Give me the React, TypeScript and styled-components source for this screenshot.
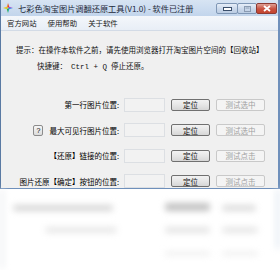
import React from 'react';
import styled, { createGlobalStyle } from 'styled-components';

const GlobalStyle = createGlobalStyle`
  html, body {
    margin: 0;
    padding: 0;
    background: #ffffff;
  }
  body {
    width: 280px;
    height: 270px;
    overflow: hidden;
    font-family: "Noto Sans CJK SC", "DejaVu Sans", sans-serif;
  }
`;

const Page = styled.div`
  width: 280px;
  height: 270px;
  display: flex;
  flex-direction: column;
  background: #ffffff;
`;

const Window = styled.div`
  width: 280px;
  height: 189px;
  box-sizing: border-box;
  display: flex;
  flex-direction: column;
  background: #c9daee;
  border-left: 1px solid #5a7aa3;
  border-right: 2px solid #6f90bb;
  border-bottom: 1px solid #6f90bb;
`;

const TitleBar = styled.div`
  height: 17px;
  display: flex;
  align-items: center;
  padding-left: 2px;
  background: linear-gradient(#d7e4f3, #c2d5ec);
`;

const TitleText = styled.span`
  font-size: 8.2px;
  color: #1e2a3a;
  margin-left: 5px;
  white-space: nowrap;
  flex: 1;
`;

const Controls = styled.div`
  display: flex;
  align-self: flex-start;
  margin-top: 3px;
  margin-right: 1px;
`;

const CtrlButton = styled.div<{ $close?: boolean; $w: number }>`
  width: ${({ $w }) => $w}px;
  height: 11px;
  box-sizing: border-box;
  border: 1px solid ${({ $close }) => ($close ? '#8d3a33' : '#7f97b5')};
  border-radius: 2px;
  margin-left: -1px;
  display: flex;
  align-items: center;
  justify-content: center;
  background: ${({ $close }) =>
    $close ? 'linear-gradient(#e0a195, #c8503f 55%, #c4452f)' : 'linear-gradient(#e6eef8, #c9d7ea 55%, #bccde3)'};
`;

const MenuBar = styled.div`
  height: 14px;
  display: flex;
  align-items: center;
  gap: 11px;
  padding-left: 6px;
  background: linear-gradient(#f4f7fb, #e8eef6);
  border-bottom: 1px solid #d3dbe6;
`;

const MenuItem = styled.span`
  font-size: 7.4px;
  color: #1a1a1a;
`;

const Client = styled.div`
  flex: 1;
  background: #f0f0f0;
  display: flex;
  flex-direction: column;
  padding: 11px 0 0 15px;
`;

const HintLine = styled.div<{ $indent?: number }>`
  font-size: 7.5px;
  line-height: 16px;
  height: 16px;
  color: #111;
  white-space: nowrap;
  padding-left: ${({ $indent }) => $indent ?? 0}px;
`;

const Mono = styled.span`
  font-family: "Liberation Mono", monospace;
  font-size: 7.5px;
  margin: 0 4px;
`;

const Form = styled.div`
  margin-top: 24px;
  display: grid;
  grid-template-columns: 103px 40px 39px 49px;
  column-gap: 6px;
  row-gap: 11.5px;
  align-items: center;
`;

const LabelCell = styled.div`
  display: flex;
  justify-content: flex-end;
  align-items: center;
  gap: 6px;
  font-size: 7.5px;
  color: #000;
  white-space: nowrap;
  height: 14px;
`;

const HelpButton = styled.div`
  width: 10px;
  height: 11px;
  box-sizing: border-box;
  border: 1px solid #8c8c8c;
  border-radius: 2px;
  background: linear-gradient(#f6f6f6, #dcdcdc);
  font-size: 7px;
  display: flex;
  align-items: center;
  justify-content: center;
  font-family: "Liberation Sans", sans-serif;
`;

const Field = styled.div`
  height: 14px;
  box-sizing: border-box;
  border: 1px solid #dcdfe3;
  background: #f2f2f2;
  margin-left: -1px;
`;

const Button = styled.div<{ $disabled?: boolean }>`
  height: 12px;
  box-sizing: border-box;
  border: 1px solid ${({ $disabled }) => ($disabled ? '#c9c9c9' : '#707070')};
  border-radius: 2px;
  background: ${({ $disabled }) => ($disabled ? '#f4f4f4' : 'linear-gradient(#f2f2f2, #e6e6e6 50%, #d6d6d6)')};
  color: ${({ $disabled }) => ($disabled ? '#a0a0a0' : '#111')};
  font-size: 7.5px;
  display: flex;
  align-items: center;
  justify-content: center;
  white-space: nowrap;
`;

const Backdrop = styled.div`
  flex: 1;
  position: relative;
  overflow: hidden;
  filter: blur(3px);
`;

const Smudge = styled.div<{ $x: number; $y: number; $w: number; $h: number; $c: string }>`
  position: absolute;
  left: ${({ $x }) => $x}px;
  top: ${({ $y }) => $y}px;
  width: ${({ $w }) => $w}px;
  height: ${({ $h }) => $h}px;
  background: ${({ $c }) => $c};
  border-radius: 3px;
`;

const AppIcon = () => (
  <svg width="10" height="10" viewBox="0 0 10 10">
    <path d="M5 0 L6.2 3.8 L5 5 Z" fill="#e53b2f" />
    <path d="M10 5 L6.2 6.2 L5 5 Z" fill="#3a8ee6" />
    <path d="M5 10 L3.8 6.2 L5 5 Z" fill="#2fb24a" />
    <path d="M0 5 L3.8 3.8 L5 5 Z" fill="#f2c01e" />
    <path d="M5 0 L3.8 3.8 L5 5 Z" fill="#f08a2c" />
    <path d="M10 5 L6.2 3.8 L5 5 Z" fill="#9b4fd1" />
    <path d="M5 10 L6.2 6.2 L5 5 Z" fill="#1aa3a3" />
    <path d="M0 5 L3.8 6.2 L5 5 Z" fill="#c6d33a" />
  </svg>
);

const rows = [
  { label: '第一行图片位置:', test: '测试选中', help: false },
  { label: '最大可见行图片位置:', test: '测试选中', help: true },
  { label: '【还原】链接的位置:', test: '测试点击', help: false },
  { label: '图片还原【确定】按钮的位置:', test: '测试点击', help: false },
];

const smudges = [
  { x: 13, y: 16, w: 100, h: 6, c: '#d6d6d6' },
  { x: 165, y: 14, w: 45, h: 8, c: '#c2c2c2' },
  { x: 222, y: 16, w: 34, h: 6, c: '#dcdcdc' },
  { x: 45, y: 38, w: 72, h: 6, c: '#e8e8e8' },
  { x: 165, y: 38, w: 45, h: 6, c: '#e4e4e4' },
  { x: 222, y: 38, w: 36, h: 6, c: '#e6e6e6' },
  { x: 165, y: 62, w: 45, h: 5, c: '#f1f1f1' },
  { x: 222, y: 62, w: 36, h: 5, c: '#f1f1f1' },
  { x: 0, y: 0, w: 4, h: 80, c: '#eef0f3' },
  { x: 276, y: 0, w: 4, h: 60, c: '#e4ebf3' },
];

export default function App() {
  return (
    <>
      <GlobalStyle />
      <Page>
        <Window>
          <TitleBar>
            <AppIcon />
            <TitleText>七彩色淘宝图片调翻还原工具(V1.0) - 软件已注册</TitleText>
            <Controls>
              <CtrlButton $w={22}>
                <svg width="9" height="4" viewBox="0 0 9 4">
                  <rect x="0.5" y="0.5" width="8" height="3" fill="#fff" stroke="#3b4f6b" strokeWidth="1" />
                </svg>
              </CtrlButton>
              <CtrlButton $w={20}>
                <svg width="7" height="6" viewBox="0 0 7 6">
                  <rect x="0.5" y="0.5" width="6" height="5" fill="none" stroke="#8a9bb2" strokeWidth="1" />
                  <rect x="1.5" y="1.5" width="4" height="1" fill="#8a9bb2" />
                </svg>
              </CtrlButton>
              <CtrlButton $w={21} $close>
                <svg width="8" height="7" viewBox="0 0 8 7">
                  <path d="M1 1 L7 6 M7 1 L1 6" stroke="#fff" strokeWidth="1.8" />
                </svg>
              </CtrlButton>
            </Controls>
          </TitleBar>
          <MenuBar>
            <MenuItem>官方网站</MenuItem>
            <MenuItem>使用帮助</MenuItem>
            <MenuItem>关于软件</MenuItem>
          </MenuBar>
          <Client>
            <HintLine>提示：在操作本软件之前，请先使用浏览器打开淘宝图片空间的【回收站】</HintLine>
            <HintLine $indent={21}>
              快捷键：<Mono>Ctrl + Q</Mono>停止还原。
            </HintLine>
            <Form>
              {rows.map(r => (
                <React.Fragment key={r.label}>
                  <LabelCell>
                    {r.help && <HelpButton>?</HelpButton>}
                    <span>{r.label}</span>
                  </LabelCell>
                  <Field />
                  <Button>定位</Button>
                  <Button $disabled>{r.test}</Button>
                </React.Fragment>
              ))}
            </Form>
          </Client>
        </Window>
        <Backdrop>
          {smudges.map((s, i) => (
            <Smudge key={i} $x={s.x} $y={s.y} $w={s.w} $h={s.h} $c={s.c} />
          ))}
        </Backdrop>
      </Page>
    </>
  );
}
